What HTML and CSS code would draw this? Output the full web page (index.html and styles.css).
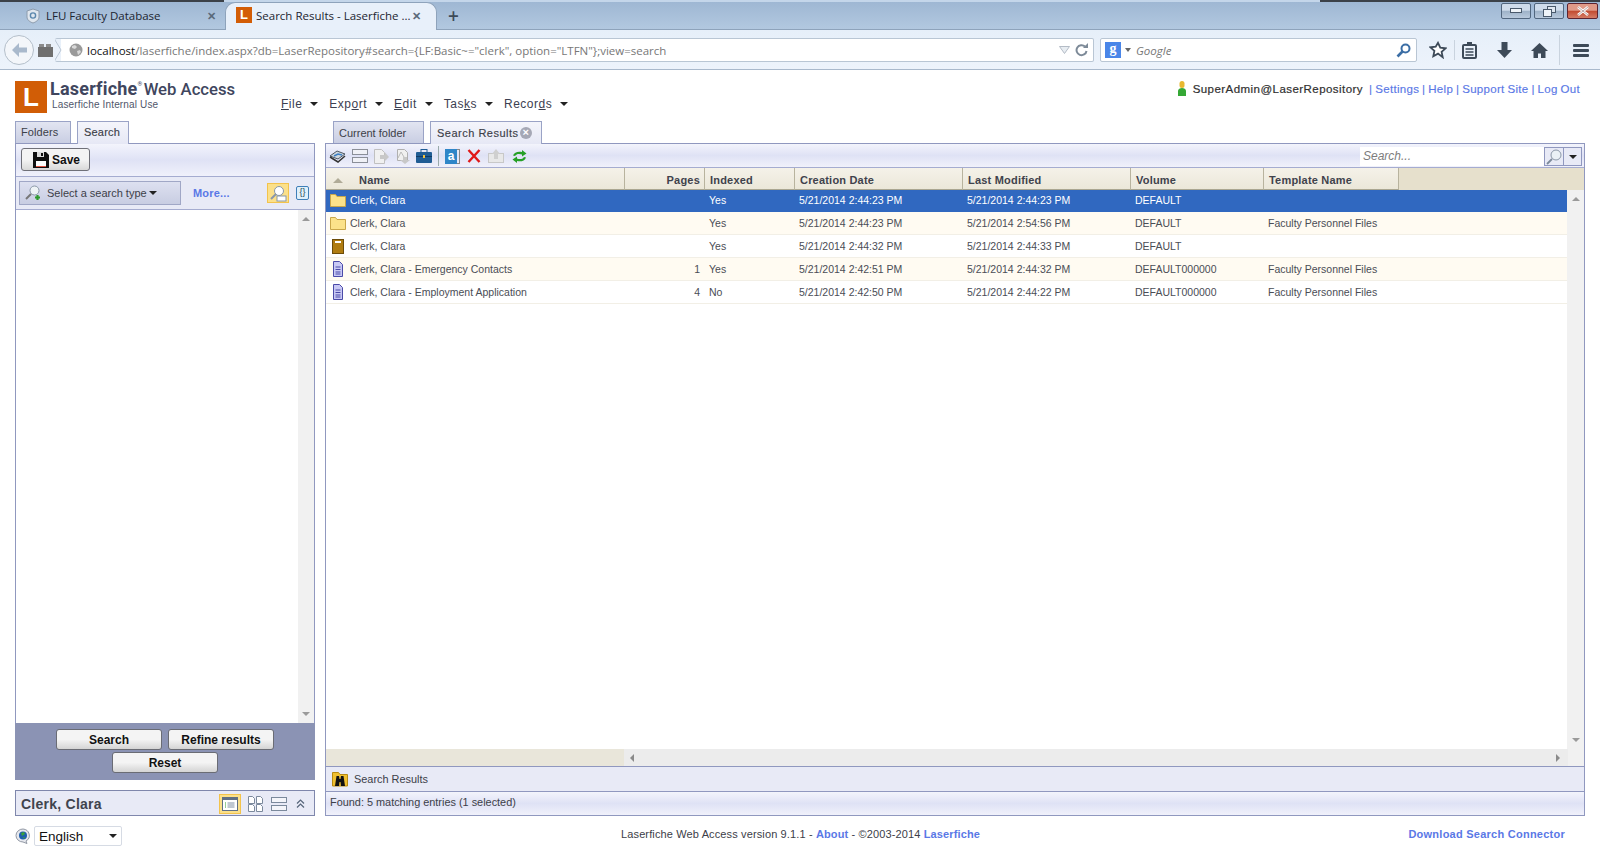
FILE: index.html
```html
<!DOCTYPE html>
<html lang="en">
<head>
<meta charset="utf-8">
<title>Search Results - Laserfiche Web Access</title>
<link rel="stylesheet" href="styles.css">
</head>
<body>
<header class="browser">
  <div class="tabstrip">
    <div class="btab">
      <svg class="fav" viewBox="0 0 16 16"><path d="M8 1l6 2v6c0 3-3 5-6 6-3-1-6-3-6-6V3z" fill="#dfe6ee" stroke="#8d9cad"/><circle cx="8" cy="7.5" r="2.6" fill="none" stroke="#5b87ad" stroke-width="1.4"/></svg>
      <span class="btab-t">LFU Faculty Database</span>
      <span class="btab-x">✕</span>
    </div>
    <div class="btab active">
      <span class="fav-l">L</span>
      <span class="btab-t">Search Results - Laserfiche ...</span>
      <span class="btab-x">✕</span>
    </div>
    <span class="plus">+</span>
    <div class="winbtns">
      <span class="wb"><svg width="12" height="6" viewBox="0 0 12 6"><rect x=".5" y=".5" width="11" height="4" fill="#eef3f8" stroke="#49596b"/></svg></span>
      <span class="wb"><svg width="13" height="11" viewBox="0 0 13 11"><rect x="4.5" y=".5" width="8" height="6" fill="#dfe7f0" stroke="#49596b"/><rect x=".5" y="3.5" width="8" height="7" fill="#eef3f8" stroke="#49596b"/></svg></span>
      <span class="wb close"><svg width="14" height="10" viewBox="0 0 14 10"><path d="M2 1l10 8M12 1L2 9" stroke="#fff" stroke-width="2.6"/><path d="M2 1l10 8M12 1L2 9" stroke="#5a2420" stroke-width=".4"/></svg></span>
    </div>
  </div>
  <div class="navbar">
    <span class="backbtn"><svg width="18" height="16" viewBox="0 0 18 16"><path d="M9 1L2 8l7 7V10.500h8v-5H9z" fill="#a9b9cc"/></svg></span>
    <svg class="pocket" width="15" height="13" viewBox="0 0 15 13"><rect x="0" y="3" width="15" height="10" fill="#6f6f6f"/><rect x="1" y="0" width="5" height="3" fill="#8b8b8b"/><rect x="8" y="0" width="5" height="3" fill="#8b8b8b"/></svg>
    <div class="urlbar">
      <svg class="chevron" width="7" height="22" viewBox="0 0 7 22"><path d="M0 1l6 10-6 10" fill="none" stroke="#b9c6d4"/></svg>
      <svg class="globe" width="14" height="14" viewBox="0 0 14 14"><circle cx="7" cy="7" r="6.500" fill="#9a9a9a"/><path d="M3 3l3-1 2 2-2 2-3-1zM8 8l3-1 1 2-3 3z" fill="#d8d8d8"/></svg>
      <span class="url"><b>localhost</b>/laserfiche/index.aspx?db=LaserRepository#search={LF:Basic~="clerk", option="LTFN"};view=search</span>
      <svg class="urlarrow" width="11" height="8" viewBox="0 0 11 8"><path d="M.5.500h10L5.500 7.500z" fill="#e8edf2" stroke="#b4bcc6"/></svg>
      <svg width="14" height="14" viewBox="0 0 14 14"><path d="M11.500 8A5 5 0 1 1 10 3.500" fill="none" stroke="#7d8a98" stroke-width="2"/><path d="M8 5h5V0z" fill="#7d8a98"/></svg>
    </div>
    <div class="gsearch">
      <span class="g-ico">g</span><span class="g-drop"></span>
      <span class="g-t">Google</span>
      <svg width="15" height="15" viewBox="0 0 15 15"><circle cx="9.500" cy="5.500" r="4" fill="#fff" stroke="#3b6ea5" stroke-width="2"/><path d="M6.500 8.500L1.500 13.500" stroke="#3b6ea5" stroke-width="2.600"/></svg>
    </div>
    <div class="navicons">
      <svg width="18" height="18" viewBox="0 0 18 18"><path d="M9 1.800l2.300 4.900 5.300.6-4 3.600 1.100 5.300L9 12.600l-4.700 2.600 1.100-5.300-4-3.600 5.300-.6z" fill="#fff" stroke="#3d4a58" stroke-width="1.800"/></svg>
      <span class="nav-sep"></span>
      <svg class="ni-clip" width="15" height="17" viewBox="0 0 15 17"><rect x="1" y="3" width="13" height="13" rx="1" fill="none" stroke="#3d4a58" stroke-width="2"/><rect x="5" y="0" width="5" height="4" fill="#3d4a58"/><path d="M3.500 7h8M3.500 10h8M3.500 13h8" stroke="#3d4a58" stroke-width="1.500"/></svg>
      <svg class="ni-down" width="15" height="16" viewBox="0 0 15 16"><path d="M4.500 0h6v8h4.500l-7.500 8L0 8h4.500z" fill="#3d4a58"/></svg>
      <svg class="ni-home" width="17" height="15" viewBox="0 0 17 15"><path d="M8.500 0L0 8h2.500v7h4.500v-4.500h3V15h4.500V8H17z" fill="#3d4a58"/></svg>
      <span class="nav-sep2"></span>
      <span class="burger"><i></i><i></i><i></i></span>
    </div>
  </div>
</header>

<div class="app">
  <div class="apphead">
    <span class="logo-box">L</span>
    <div class="logo-text">
      <div class="logo-main"><span class="lm-a">Laserfiche</span><sup>®</sup> <span class="lm-b">Web Access</span></div>
      <div class="logo-sub">Laserfiche Internal Use</div>
    </div>
    <nav class="menu">
      <span class="mi"><u>F</u>ile<i class="caret"></i></span>
      <span class="mi">Exp<u>o</u>rt<i class="caret"></i></span>
      <span class="mi"><u>E</u>dit<i class="caret"></i></span>
      <span class="mi">Tas<u>k</u>s<i class="caret"></i></span>
      <span class="mi">Recor<u>d</u>s<i class="caret"></i></span>
    </nav>
    <div class="userbar">
      <svg width="10" height="15" viewBox="0 0 10 15"><rect x="2.500" y="0" width="5" height="7" rx="2.500" fill="#e8b830"/><path d="M1 15V10c0-2 2-3 4-3s4 1 4 3v5z" fill="#35a835"/></svg>
      <span class="uname">SuperAdmin@LaserRepository</span>
      <span class="ulinks">| <a>Settings</a> | <a>Help</a> | <a>Support Site</a> | <a>Log Out</a></span>
    </div>
  </div>

  <div class="columns">
    <aside class="left">
      <div class="tabs ltabs">
        <span class="tab fold">Folders</span>
        <span class="tab on srch">Search</span>
      </div>
      <div class="lpanel">
        <div class="ltool">
          <span class="savebtn">
            <svg width="16" height="16" viewBox="0 0 16 16"><path d="M0 0h13l3 3v13H0z" fill="#111"/><rect x="3" y="9" width="10" height="6" fill="#fff"/><rect x="3" y="14" width="10" height="1" fill="#e05040"/><rect x="4" y="0" width="7" height="5" fill="#ddd"/><rect x="8" y="1" width="2" height="3" fill="#111"/></svg>
            Save
          </span>
        </div>
        <div class="lrow">
          <span class="stype">
            <svg width="16" height="16" viewBox="0 0 16 16"><circle cx="9.500" cy="5.500" r="4.500" fill="#eef3f6" stroke="#8b98a8"/><path d="M6 9L1 14" stroke="#777" stroke-width="2"/><path d="M10 12.500h5M12.500 10v5" stroke="#2d9a2d" stroke-width="2.200"/></svg>
            <span>Select a search type</span><i class="caret"></i>
          </span>
          <a class="more">More...</a>
          <span class="profile"><svg width="18" height="17" viewBox="0 0 18 17"><circle cx="10" cy="6" r="4.500" fill="#fff" stroke="#8897aa"/><path d="M7 9L2 14" stroke="#8897aa" stroke-width="2"/><rect x="8" y="11" width="9" height="5" fill="#fff" stroke="#8897aa"/></svg></span>
          <span class="braces">{}</span>
        </div>
        <div class="lbody">
          <div class="lblank"></div>
          <div class="vscroll"><i class="up"></i><i class="dn"></i></div>
        </div>
        <div class="lbtns">
          <span class="gbtn">Search</span>
          <span class="gbtn">Refine results</span>
          <span class="gbtn">Reset</span>
        </div>
      </div>
      <div class="entrybar">
        <span class="entry">Clerk, Clara</span>
        <span class="vw on"><svg width="16" height="14" viewBox="0 0 16 14"><rect x=".5" y=".5" width="15" height="13" fill="#fff" stroke="#5f6f85"/><rect x="1" y="1" width="14" height="2" fill="#5f6f85"/><path d="M3 6h1M3 8h1M3 10h1" stroke="#2d9a2d"/><path d="M5.500 6h7M5.500 8h7M5.500 10h7" stroke="#8090a4"/></svg></span>
        <span class="vw"><svg width="15" height="16" viewBox="0 0 15 16"><path d="M.5.500h4l2 2v5h-6zM8.500.500h4l2 2v5h-6zM.5 8.500h4l2 2v5h-6zM8.500 8.500h4l2 2v5h-6z" fill="#fff" stroke="#7b899c"/></svg></span>
        <span class="vw"><svg width="16" height="14" viewBox="0 0 16 14"><rect x=".5" y=".5" width="15" height="5" fill="#f4f5fa" stroke="#7b899c"/><rect x=".5" y="8.500" width="15" height="5" fill="#f4f5fa" stroke="#7b899c"/></svg></span>
        <span class="vw chev"><svg width="9" height="9" viewBox="0 0 9 9"><path d="M1 4.500L4.500 1 8 4.500M1 8.500L4.500 5 8 8.500" fill="none" stroke="#56657a" stroke-width="1.200"/></svg></span>
      </div>
      <div class="lang">
        <svg width="16" height="16" viewBox="0 0 16 16"><path d="M8 1a7 6.500 0 1 0 0 13l4 1.500-1-2.500a7 6.500 0 0 0-3-12z" fill="#e6e8ee" stroke="#9299a5"/><circle cx="8" cy="7.500" r="4" fill="#1e5fae"/><path d="M6 5l3-1 1 2-3 2zM8 9l2 0-1 2z" fill="#3aa23a"/></svg>
        <span class="langsel">English<i class="caret"></i></span>
      </div>
    </aside>

    <main class="right">
      <div class="tabs rtabs">
        <span class="tab cur">Current folder</span>
        <span class="tab on sr">Search Results <span class="tabx">×</span></span>
      </div>
      <div class="rpanel">
        <div class="rtool">
          <svg width="17" height="14" viewBox="0 0 17 14"><path d="M1 7l7-5 8 3-7 5z" fill="#cdd6de" stroke="#4c5763"/><path d="M5 7l4-2 4 1" stroke="#3d7fc4" stroke-width="1.500" fill="none"/><path d="M1 8l8 5 7-6" stroke="#333" stroke-width="1.500" fill="none"/></svg>
          <svg width="16" height="14" viewBox="0 0 16 14"><rect x=".5" y=".5" width="15" height="5" fill="#f0f1f6" stroke="#8b8f98"/><rect x=".5" y="8.500" width="15" height="5" fill="#f0f1f6" stroke="#8b8f98"/></svg>
          <svg width="15" height="15" viewBox="0 0 15 15"><path d="M.5.500h7l3 3v11h-10z" fill="#f0f0f0" stroke="#c0c0c0"/><path d="M6 6h5V3.500L15 8l-4 4V10H6z" fill="#c8c8c8"/></svg>
          <svg width="15" height="15" viewBox="0 0 15 15"><path d="M2.500.500h7l3 3v8h-10z" fill="#f0f0f0" stroke="#b0b0b0"/><path d="M3 9l3-6 3 5" fill="none" stroke="#bbb"/><path d="M8 8h4v3h3l-5 4-5-4h3z" fill="#c8c8c8"/></svg>
          <svg width="16" height="14" viewBox="0 0 16 14"><rect x="0" y="3" width="16" height="11" rx="1" fill="#1f5c94"/><rect x="5" y="0.500" width="6" height="3" fill="none" stroke="#1f5c94"/><rect x="0" y="7" width="16" height="1" fill="#0f3a66"/><rect x="7" y="6" width="2" height="3" fill="#f0c040"/></svg>
          <span class="tsep"></span>
          <span class="ti-a"><span class="ti-ab">a</span><i></i></span>
          <svg class="ti-x" width="14" height="14" viewBox="0 0 14 14"><path d="M1.500 1l11 12M12.500 1L1.500 13" stroke="#e01818" stroke-width="2.400"/></svg>
          <svg class="ti-up" width="16" height="14" viewBox="0 0 16 14"><rect x=".5" y="4.500" width="15" height="9" fill="#e8e8e8" stroke="#c8c8c8"/><path d="M8 0l4 5h-2v5H6V5H4z" fill="#cfcfcf"/></svg>
          <svg class="ti-re" width="15" height="15" viewBox="0 0 15 15"><path d="M1 6.500C2 3 6.500 2 10 3V1l4.500 3.500L10 7.500V5.500C7.500 4.500 4.500 4.500 3 7z" fill="#25a025"/><path d="M14 8.500c-1 3.500-5.500 4.500-9 3.500v2L.5 10.500 5 7.500v2c2.500 1 5.500 1 7-1.500z" fill="#25a025"/></svg>
          <span class="tspace"></span>
          <span class="qsearch">Search...</span>
          <span class="qbtn"><svg width="16" height="16" viewBox="0 0 16 16"><circle cx="10" cy="6" r="5" fill="#eaf1f6" stroke="#8b98a8"/><path d="M6 10L1 15" stroke="#7c8a9a" stroke-width="1.800"/></svg></span>
          <span class="qbtn qdrop"><i class="caret"></i></span>
        </div>
        <div class="ghead">
          <div class="cols hcols">
            <span class="hc hname"><i class="sort"></i>Name</span>
            <span class="hc hpages">Pages</span>
            <span class="hc">Indexed</span>
            <span class="hc">Creation Date</span>
            <span class="hc">Last Modified</span>
            <span class="hc">Volume</span>
            <span class="hc">Template Name</span>
          </div>
        </div>
        <div class="gmid">
          <div class="grows">
            <div class="cols row sel">
              <span class="c cname"><svg class="ri" width="16" height="14" viewBox="0 0 16 14"><path d="M.5 13.500V1.500h5l1.500 2h8.500v10z" fill="#fbe28a" stroke="#c9a74a"/></svg>Clerk, Clara</span>
              <span class="c cpg"></span><span class="c">Yes</span><span class="c">5/21/2014 2:44:23 PM</span><span class="c">5/21/2014 2:44:23 PM</span><span class="c">DEFAULT</span><span class="c"></span>
            </div>
            <div class="cols row alt">
              <span class="c cname"><svg class="ri" width="16" height="14" viewBox="0 0 16 14"><path d="M.5 13.500V1.500h5l1.500 2h8.500v10z" fill="#fbe28a" stroke="#c9a74a"/></svg>Clerk, Clara</span>
              <span class="c cpg"></span><span class="c">Yes</span><span class="c">5/21/2014 2:44:23 PM</span><span class="c">5/21/2014 2:54:56 PM</span><span class="c">DEFAULT</span><span class="c">Faculty Personnel Files</span>
            </div>
            <div class="cols row">
              <span class="c cname"><svg class="ri" width="16" height="15" viewBox="0 0 16 15"><rect x="2.500" y=".5" width="11" height="14" fill="#b07c10" stroke="#6d4c08"/><rect x="5" y="2" width="6" height="2" fill="#fff"/></svg>Clerk, Clara</span>
              <span class="c cpg"></span><span class="c">Yes</span><span class="c">5/21/2014 2:44:32 PM</span><span class="c">5/21/2014 2:44:33 PM</span><span class="c">DEFAULT</span><span class="c"></span>
            </div>
            <div class="cols row alt">
              <span class="c cname"><svg class="ri" width="16" height="16" viewBox="0 0 16 16"><path d="M3.500.500h6l3 3v12h-9z" fill="#c8c8f4" stroke="#4a4aa8"/><path d="M5.500 6h5M5.500 8.500h5M5.500 11h5M5.500 13h5" stroke="#4a4aa8"/></svg>Clerk, Clara - Emergency Contacts</span>
              <span class="c cpg">1</span><span class="c">Yes</span><span class="c">5/21/2014 2:42:51 PM</span><span class="c">5/21/2014 2:44:32 PM</span><span class="c">DEFAULT000000</span><span class="c">Faculty Personnel Files</span>
            </div>
            <div class="cols row">
              <span class="c cname"><svg class="ri" width="16" height="16" viewBox="0 0 16 16"><path d="M3.500.500h6l3 3v12h-9z" fill="#c8c8f4" stroke="#4a4aa8"/><path d="M5.500 6h5M5.500 8.500h5M5.500 11h5M5.500 13h5" stroke="#4a4aa8"/></svg>Clerk, Clara - Employment Application</span>
              <span class="c cpg">4</span><span class="c">No</span><span class="c">5/21/2014 2:42:50 PM</span><span class="c">5/21/2014 2:44:22 PM</span><span class="c">DEFAULT000000</span><span class="c">Faculty Personnel Files</span>
            </div>
          </div>
          <div class="vscroll rv"><i class="up"></i><i class="dn"></i></div>
        </div>
        <div class="gfoot">
          <div class="gfoot-l"></div>
          <div class="hscroll"><i class="lf"></i><i class="rt"></i></div>
          <div class="corner"></div>
        </div>
        <div class="stat1">
          <svg width="16" height="16" viewBox="0 0 16 16"><path d="M.5 15V1.500h6l1.500 2h7.500V15z" fill="#f0c030" stroke="#b88a10"/><path d="M3 15l1.500-10h2.500l.5 3h1l.5-3h2.500L13 15H9l-.5-4h-1L7 15z" fill="#111"/></svg>
          <span>Search Results</span>
        </div>
        <div class="stat2">Found: 5 matching entries (1 selected)</div>
      </div>
      <footer class="foot">
        <span class="ver">Laserfiche Web Access version 9.1.1 - <a>About</a> - ©2003-2014 <a>Laserfiche</a></span>
        <a class="dl">Download Search Connector</a>
      </footer>
    </main>
  </div>
</div>
</body>
</html>
```

FILE: styles.css
```css
* { box-sizing: border-box; }
html, body { margin: 0; padding: 0; }
body { width: 1600px; height: 859px; overflow: hidden; background: #fff; font-family: "Liberation Sans", Arial, sans-serif; color: #3c4048; }
svg { flex: none; display: block; }
i { display: block; font-style: normal; }
a { color: #5a78e6; }

/* Browser chrome */
.browser { height: 70px; border-bottom: 1px solid #a9b9cc; background: #e8f0fa; }
.tabstrip { height: 30px; display: flex; align-items: center; padding: 2px 0 0 20px; background: linear-gradient(90deg, #3b4148 224px, #c4d6ea 224px, #c4d6ea 1320px, #3b4148 1320px) top / 100% 2px no-repeat, linear-gradient(#9db6d2, #b2c8e0); border-bottom: 1px solid #8ea3bb; font-family: "Open Sans", sans-serif; font-size: 11.500px; color: #1c2530; }
.btab { width: 205px; height: 28px; display: flex; align-items: center; padding: 0 4px 0 5px; }
.btab .fav { width: 16px; height: 16px; margin-right: 5px; }
.btab-t { flex: 1; white-space: nowrap; overflow: hidden; }
.btab-x { width: 14px; font-size: 11px; font-weight: 700; color: #5a6a7a; }
.btab.active { width: 212px; height: 28px; margin-bottom: -1px; padding: 0 10px 3px; background: #e8f0fa; border-radius: 10px 10px 0 0; border: 1px solid #8ea3bb; border-bottom: 0; }
.fav-l { width: 16px; height: 16px; margin-right: 4px; background: #d35d06; color: #fff; font: 700 13px/16px "Liberation Sans", sans-serif; text-align: center; }
.plus { margin-left: 11px; font-size: 19px; font-weight: 600; color: #3d4a58; line-height: 20px; }
.winbtns { margin-left: auto; margin-right: 2px; display: flex; gap: 3px; align-self: flex-start; margin-top: 1px; }
.wb { width: 30px; height: 16px; display: flex; align-items: center; justify-content: center; border: 1px solid #51667e; border-radius: 2px; background: linear-gradient(#cfdceb 45%, #9db1c7 50%, #b8c9dc); }
.wb.close { width: 31px; border-color: #5d2430; background: linear-gradient(#e09a88 45%, #c14a30 50%, #d47c66); }
.navbar { height: 39px; display: flex; align-items: center; padding: 1px 0 0 4px; background: linear-gradient(#e6eff9, #edf3fb); }
.backbtn { width: 30px; height: 30px; flex: none; display: flex; align-items: center; justify-content: center; border: 1px solid #b4bfca; border-radius: 50%; background: #f3f6fa; }
.pocket { margin: 0 0 0 4px; }
.urlbar { width: 1039px; height: 24px; margin: 0 6px 0 2px; padding: 0 4px 0 0; display: flex; align-items: center; background: linear-gradient(90deg, transparent 6px, #fff 6px); border: 1px solid #b9c6d4; border-left: 0; border-radius: 2px; }
.chevron { margin-right: 7px; }
.globe { margin-right: 4px; }
.url { flex: 1; font: 11.500px "Open Sans", sans-serif; color: #777; white-space: nowrap; overflow: hidden; }
.url b { font-weight: 400; color: #111; }
.urlarrow { margin-right: 5px; }
.gsearch { width: 317px; height: 24px; display: flex; align-items: center; padding: 0 5px 0 4px; background: #fff; border: 1px solid #b9c6d4; border-radius: 2px; }
.g-ico { width: 16px; height: 16px; background: #4a86e8; color: #fff; font: 700 14px/13px "Liberation Serif", serif; text-align: center; }
.g-drop { width: 0; height: 0; margin: 0 5px 0 4px; border: 3px solid transparent; border-top: 4px solid #666; border-bottom: 0; }
.g-t { flex: 1; font: italic 11.500px "Open Sans", sans-serif; color: #777; }
.navicons { flex: 1; display: flex; align-items: center; padding-left: 12px; }
.nav-sep { width: 1px; height: 20px; margin: 0 7px 0 7px; background: #c9d3de; }
.ni-down { margin-left: 20px; }
.ni-home { margin-left: 19px; }
.nav-sep2 { width: 1px; height: 30px; margin: 0 13px 0 11px; background: #c9d3de; }
.burger { width: 16px; display: flex; flex-direction: column; gap: 2px; }
.burger i { height: 3px; background: #3d4a58; border-radius: 1px; }

/* App header */
.app { padding: 0 15px; }
.apphead { height: 51px; display: flex; align-items: flex-start; padding-top: 11px; }
.logo-box { width: 32px; height: 32px; flex: none; background: #d15d06; color: #fff; font: 700 26px/32px "Liberation Sans", sans-serif; text-align: center; }
.logo-text { width: 231px; margin-left: 3px; color: #40465e; }
.logo-main { font-size: 18px; line-height: 20px; white-space: nowrap; font-family: "Roboto", sans-serif; margin-top: -2px; }
.logo-main sup { font-size: 6px; line-height: 0; vertical-align: 9px; }
.lm-a { font-weight: 700; letter-spacing: .2px; }
.lm-b { margin-left: -3px; font-size: 16.700px; font-weight: 500; }
.logo-sub { margin: -1px 0 0 2px; font-size: 10px; letter-spacing: .15px; line-height: 12px; color: #50566a; }
.menu { display: flex; font-size: 12px; letter-spacing: .5px; color: #3c4050; padding-top: 16px; white-space: nowrap; }
.mi { display: flex; align-items: center; margin-right: 11px; }
.mi .caret { margin-left: 8px; }
.caret { width: 0; height: 0; border: 4px solid transparent; border-top: 4px solid #222; border-bottom: 0; }
.userbar { margin-left: auto; margin-right: 5px; display: flex; align-items: center; gap: 6px; font-size: 12px; white-space: nowrap; }
.uname { font-size: 11.500px; letter-spacing: .45px; color: #303030; -webkit-text-stroke: .2px #303030; }
.ulinks { color: #5a78e6; font-size: 11.500px; letter-spacing: .3px; word-spacing: -.6px; -webkit-text-stroke: .15px #5a78e6; }

/* Columns */
.columns { display: flex; gap: 10px; }
.left { width: 300px; flex: none; }
.right { width: 1260px; flex: none; }
.tabs { height: 22px; display: flex; align-items: flex-end; gap: 6px; font-size: 11px; }
.tab { height: 22px; padding: 0 5px; display: flex; align-items: center; border: 1px solid #9aa3c6; border-bottom: 0; background: linear-gradient(#e2e5f1, #c9cee3); color: #3c4048; }
.tab.on { background: linear-gradient(#f4f5fb, #e6e8f5); margin-bottom: -1px; height: 23px; position: relative; }
.tab.fold { width: 56px; padding-bottom: 2px; letter-spacing: .1px; }
.tab.srch { width: 52px; padding: 0 0 3px 6px; letter-spacing: .2px; -webkit-text-stroke: .15px #3c4048; }
.rtabs { padding-left: 8px; }
.tab.cur { width: 91px; padding-left: 5px; }
.tab.sr { width: 112px; padding-left: 6px; letter-spacing: .5px; -webkit-text-stroke: .15px #3c4048; }
.tabx { width: 12px; height: 12px; margin-left: 1px; border-radius: 50%; background: #a5a8b5; color: #fff; font: 700 11px/11px "Liberation Sans", sans-serif; letter-spacing: 0; text-align: center; -webkit-text-stroke: 0; }

.lpanel { height: 637px; border: 1px solid #9098bf; border-bottom: 0; display: flex; flex-direction: column; }
.ltool { height: 33px; flex: none; padding: 4px 5px; border-bottom: 1px solid #a5acd0; background: linear-gradient(#f3f4fc, #dfe2f5 50%, #f0f1fb); }
.savebtn { width: 69px; height: 23px; display: flex; align-items: center; gap: 3px; padding-left: 11px; font-size: 12px; font-weight: 700; color: #111; border: 1px solid #6f7078; border-radius: 3px; background: linear-gradient(#f4f4f4 50%, #d8d8d8); }
.lrow { height: 33px; flex: none; display: flex; align-items: center; padding-left: 3px; background: #e8eaf6; border-bottom: 1px solid #a5acd0; }
.stype { width: 162px; height: 24px; display: flex; align-items: center; gap: 6px; padding-left: 5px; font-size: 11px; color: #3c4048; border: 1px solid #a0a7c6; background: linear-gradient(#dde0f0, #c8cde2); }
.stype .caret { margin-left: -4px; }
.more { margin-left: 12px; font-size: 11px; font-weight: 700; letter-spacing: .2px; width: 74px; }
.profile { width: 22px; height: 20px; display: flex; align-items: center; justify-content: center; background: #fbe08a; border: 1px solid #f3c34c; }
.braces { width: 13px; height: 14px; margin-left: 7px; border: 1px solid #3f7fb8; border-radius: 2px; background: #dff0fb; font-size: 9px; line-height: 11px; text-align: center; color: #245; }
.lbody { flex: 1; display: flex; min-height: 0; background: #fff; }
.lblank { flex: 1; }
.vscroll { width: 16px; flex: none; display: flex; flex-direction: column; justify-content: space-between; align-items: center; padding: 7px 0; background: #f1f1f1; }
.up { width: 0; height: 0; border: 4px solid transparent; border-bottom: 4px solid #9a9a9a; border-top: 0; }
.dn { width: 0; height: 0; border: 4px solid transparent; border-top: 4px solid #9a9a9a; border-bottom: 0; }
.lbtns { height: 57px; flex: none; margin: 0 -1px; padding: 6px 0 0; display: flex; flex-wrap: wrap; align-content: flex-start; justify-content: center; gap: 2px 6px; background: #8b93b4; }
.gbtn { width: 106px; height: 21px; text-align: center; font-size: 12px; font-weight: 700; line-height: 20px; color: #111; border: 1px solid #6a6c74; border-radius: 3px; background: linear-gradient(#f4f4f4 50%, #d4d4d4); }
.entrybar { height: 26px; margin-top: 10px; display: flex; align-items: center; padding: 1px 5px 0 5px; border: 1px solid #7f87ac; background: #e8eaf6; }
.entry { flex: 1; font-size: 14px; font-weight: 700; color: #40444e; letter-spacing: .25px; }
.vw { width: 22px; height: 20px; display: flex; align-items: center; justify-content: center; margin-left: 2px; }
.vw.on { background: #fbe08a; border: 1px solid #f3c34c; margin-right: 1px; }
.vw + .vw { margin-left: 2px; }
.vw.chev { width: 17px; }
.lang { margin-top: 10px; display: flex; align-items: center; gap: 3px; }
.langsel { width: 88px; height: 20px; display: flex; align-items: center; justify-content: space-between; padding: 0 4px; border: 1px solid #d6dbe4; border-radius: 2px; font-size: 13.500px; color: #111; }

.rpanel { height: 673px; border: 1px solid #9098bf; display: flex; flex-direction: column; }
.rtool { height: 24px; flex: none; display: flex; align-items: center; gap: 6px; padding: 1px 2px 0 3px; background: linear-gradient(#f3f4fc, #dfe2f5 50%, #f0f1fb); border-bottom: 1px solid #a5acd0; }
.tsep { width: 1px; height: 20px; background: #99aaaa; }
.ti-a { width: 16px; height: 15px; display: flex; }
.ti-ab { width: 12px; height: 15px; background: #2f86c8; color: #fff; font: 700 12px/14px "Liberation Sans", sans-serif; text-align: center; }
.ti-a i { width: 3px; height: 15px; border: 1px solid #888; border-left: 0; }
.ti-up { margin-left: 1px; }
.ti-re { margin-left: 2px; }
.tspace { flex: 1; }
.qsearch { width: 184px; height: 19px; margin: 1px -6px 0 0; padding-left: 3px; font: italic 12px/19px "Liberation Sans", sans-serif; color: #7c7c7c; background: #fff; }
.qbtn { width: 20px; height: 19px; display: flex; align-items: center; justify-content: center; margin: 1px -6px 0 0; border: 1px solid #9098bf; background: #e8eaf6; }
.qdrop { width: 18px; margin-right: 0; border-left: 0; }
.ghead { height: 22px; flex: none; background: #e6e0cc; }
.cols { display: grid; grid-template-columns: 299px 80px 90px 168px 168px 133px 135px; width: 1073px; font-size: 10.500px; }
.hcols { height: 22px; font-size: 11px; letter-spacing: .2px; font-weight: 700; color: #3f424c; }
.hc { display: flex; align-items: center; padding: 3px 0 0 5px; border-right: 1px solid #b8b39e; border-bottom: 1px solid #aaa691; background: linear-gradient(#f5f2e9, #ebe7d9); white-space: nowrap; }
.hname { padding-left: 7px; }
.sort { width: 0; height: 0; margin-right: 16px; border: 5px solid transparent; border-bottom: 5px solid #b0ab98; border-top: 0; }
.hpages { justify-content: flex-end; padding-right: 4px; }
.gmid { flex: 1; display: flex; min-height: 0; background: #fff; }
.grows { flex: 1; }
.row { width: 1241px; height: 23px; grid-template-columns: 298px 80px 90px 168px 168px 133px 304px; align-items: center; border-bottom: 1px solid #f2efe6; color: #4a4d55; }
.row.alt { background: #fffbf2; }
.row.sel { height: 22px; padding-bottom: 2px; background: #3068c0; color: #fff; border-bottom: 0; }
.c { padding-left: 5px; white-space: nowrap; }
.cname { display: flex; align-items: center; padding-left: 4px; }
.ri { margin-right: 4px; }
.cpg { text-align: right; padding-right: 4px; }
.rv { width: 17px; }
.gfoot { height: 17px; flex: none; display: flex; }
.gfoot-l { width: 298px; background: #e9e6da; }
.hscroll { width: 944px; display: flex; justify-content: space-between; align-items: center; padding: 0 8px 0 6px; background: #ececec; }
.lf { width: 0; height: 0; border: 4px solid transparent; border-right: 4px solid #8a8a8a; border-left: 0; }
.rt { width: 0; height: 0; border: 4px solid transparent; border-left: 4px solid #8a8a8a; border-right: 0; }
.corner { flex: 1; background: #f1f1f1; }
.stat1 { height: 26px; flex: none; display: flex; align-items: center; gap: 6px; padding-left: 6px; font-size: 10.900px; border-top: 1px solid #9098bf; border-bottom: 1px solid #9098bf; background: #e8eaf6; }
.stat2 { height: 23px; flex: none; padding-left: 4px; font-size: 10.900px; line-height: 20px; background: linear-gradient(#f3f4fc, #dfe2f5 50%, #f0f1fb); }
.foot { height: 20px; margin-top: 8px; display: flex; align-items: center; font-size: 11px; letter-spacing: .13px; }
.ver { margin-left: 296px; }
.ver a, .dl { font-weight: 700; }
.dl { margin-left: auto; margin-right: 20px; letter-spacing: .25px; }
```
